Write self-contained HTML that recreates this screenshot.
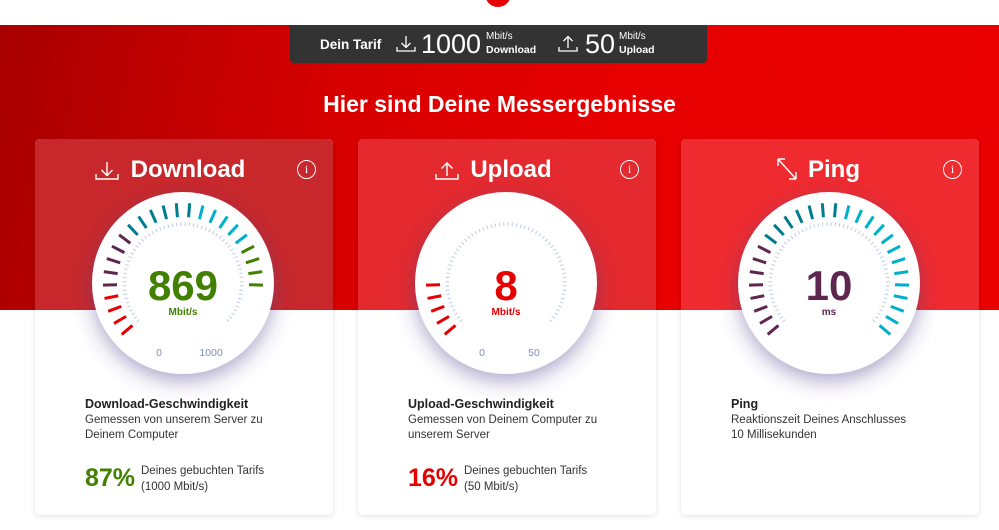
<!DOCTYPE html>
<html><head><meta charset="utf-8">
<style>
*{margin:0;padding:0;box-sizing:border-box}
body{width:999px;height:530px;overflow:hidden;background:#fff;font-family:"Liberation Sans",sans-serif;position:relative}
.red{position:absolute;left:0;top:25px;width:999px;height:285px;background:linear-gradient(100deg,#a80000 0%,#d80000 35%,#e60000 60%,#ea0000 100%)}
.logo{position:absolute;left:485px;top:-19px;width:26px;height:26px;border-radius:50%;background:#e60000}
.bar{position:absolute;left:290px;top:25px;width:417px;height:38px;background:#333;border-radius:0 0 4px 4px;color:#fff}
.bar .t{position:absolute;font-weight:bold}
h1{position:absolute;left:0;width:999px;top:91px;text-align:center;color:#fff;font-size:23px;font-weight:bold}
.card{position:absolute;top:139px;width:298px;height:376px;border-radius:5px;overflow:hidden;background:#fff;box-shadow:0 1px 6px rgba(0,0,0,.12)}
.card .top{position:absolute;left:0;top:0;width:100%;height:171px}
.card h2{position:absolute;top:17px;left:0;width:100%;text-align:center;color:#fff;font-size:24px;font-weight:bold}
.info{position:absolute;top:21px;width:19px;height:19px;border:1.5px solid #fff;border-radius:50%;color:#fff;font-size:12px;text-align:center;line-height:16px;font-family:"Liberation Serif",serif}
.card svg.g{position:absolute;left:0;top:0}
.txt{position:absolute;left:50px;top:258px;color:#333;font-size:11.5px;line-height:15px}
.txt b{font-size:12.5px;color:#222}
.pct{position:absolute;left:50px;top:325px;font-size:25px;font-weight:bold}
.pl{position:absolute;left:106px;top:324px;font-size:11.5px;line-height:16px;color:#333}
</style></head><body>
<div class="red"></div>
<div class="logo"></div>
<div class="bar">
 <div class="t" style="left:30px;top:12px;font-size:13.5px">Dein Tarif</div>
 <svg style="position:absolute;left:106px;top:10px" width="20" height="18" viewBox="0 0 20 18" fill="none" stroke="#fff" stroke-width="1.3"><path d="M10 1v11M5.5 8l4.5 4.5 4.5-4.5M1 12v4h18v-4"/></svg>
 <div class="t" style="left:131px;top:4px;font-size:27px;font-weight:normal">1000</div>
 <div class="t" style="left:196px;top:6px;font-size:10px;font-weight:normal">Mbit/s</div>
 <div class="t" style="left:196px;top:19px;font-size:10.5px">Download</div>
 <svg style="position:absolute;left:268px;top:10px" width="20" height="18" viewBox="0 0 20 18" fill="none" stroke="#fff" stroke-width="1.3"><path d="M10 13V2M5.5 6l4.5-4.5 4.5 4.5M1 12v4h18v-4"/></svg>
 <div class="t" style="left:295px;top:4px;font-size:27px;font-weight:normal">50</div>
 <div class="t" style="left:329px;top:6px;font-size:10px;font-weight:normal">Mbit/s</div>
 <div class="t" style="left:329px;top:19px;font-size:10.5px">Upload</div>
</div>
<h1>Hier sind Deine Messergebnisse</h1>

<div class="card" style="left:35px">
 <div class="top" style="background:#c8282b"></div>
 <svg style="position:absolute;left:60px;top:22px" width="24" height="20" viewBox="0 0 24 20" fill="none" stroke="#fff" stroke-width="1.4"><path d="M12 1v13M6.5 9l5.5 5.5 5.5-5.5M1 13v5h22v-5"/></svg>
 <h2 style="padding-left:8px">Download</h2>
 <div class="info" style="left:262px">i</div>
 <svg class="g" id="g1" width="298" height="376"></svg>
 <div class="txt"><b>Download-Geschwindigkeit</b><br>Gemessen von unserem Server zu<br>Deinem Computer</div>
 <div class="pct" style="color:#428000">87%</div>
 <div class="pl">Deines gebuchten Tarifs<br>(1000 Mbit/s)</div>
</div>

<div class="card" style="left:358px">
 <div class="top" style="background:#e42a2e"></div>
 <svg style="position:absolute;left:77px;top:22px" width="24" height="20" viewBox="0 0 24 20" fill="none" stroke="#fff" stroke-width="1.4"><path d="M12 15V2M6.5 7.5L12 2l5.5 5.5M1 13v5h22v-5"/></svg>
 <h2 style="padding-left:8px">Upload</h2>
 <div class="info" style="left:262px">i</div>
 <svg class="g" id="g2" width="298" height="376"></svg>
 <div class="txt"><b>Upload-Geschwindigkeit</b><br>Gemessen von Deinem Computer zu<br>unserem Server</div>
 <div class="pct" style="color:#e60000">16%</div>
 <div class="pl">Deines gebuchten Tarifs<br>(50 Mbit/s)</div>
</div>

<div class="card" style="left:681px">
 <div class="top" style="background:#ef2b2f"></div>
 <svg style="position:absolute;left:95px;top:18px" width="22" height="24" viewBox="0 0 22 24" fill="none" stroke="#fff" stroke-width="1.4"><path d="M2 2l18 20M2 2v7M2 2h7M20 22v-7M20 22h-7"/></svg>
 <h2 style="padding-left:8px">Ping</h2>
 <div class="info" style="left:262px">i</div>
 <svg class="g" id="g3" width="298" height="376"></svg>
 <div class="txt"><b>Ping</b><br>Reaktionszeit Deines Anschlusses<br>10 Millisekunden</div>
</div>

<script>
function gauge(id,cols,val,unit,vc,lbl){
 var s=document.getElementById(id),cx=148,cy=144,h='';
 h+='<defs><filter id="f'+id+'" x="-50%" y="-50%" width="200%" height="200%"><feDropShadow dx="0" dy="7" stdDeviation="10" flood-color="#4a3a8a" flood-opacity="0.45"/></filter></defs>';
 h+='<circle cx="'+cx+'" cy="'+cy+'" r="91" fill="#fff" filter="url(#f'+id+')"/>';
 var N=28,a0=-130,a1=130;
 for(var i=0;i<N;i++){var c=cols(i);if(!c)continue;var a=(a0+(a1-a0)*i/(N-1))*Math.PI/180,sn=Math.sin(a),cs=-Math.cos(a);
  h+='<line x1="'+(cx+66*sn)+'" y1="'+(cy+66*cs)+'" x2="'+(cx+80*sn)+'" y2="'+(cy+80*cs)+'" stroke="'+c+'" stroke-width="3"/>';}
 var M=64;
 for(var i=0;i<M;i++){var a=(a0+(a1-a0)*i/(M-1))*Math.PI/180,sn=Math.sin(a),cs=-Math.cos(a);
  h+='<line x1="'+(cx+57*sn)+'" y1="'+(cy+57*cs)+'" x2="'+(cx+60.5*sn)+'" y2="'+(cy+60.5*cs)+'" stroke="#c0cae6" stroke-width="1"/>';}
 h+='<text x="'+cx+'" y="'+(cy+17)+'" text-anchor="middle" font-family="Liberation Sans" font-weight="bold" font-size="42" fill="'+vc+'">'+val+'</text>';
 h+='<text x="'+cx+'" y="'+(cy+32)+'" text-anchor="middle" font-family="Liberation Sans" font-weight="bold" font-size="10" fill="'+vc+'">'+unit+'</text>';
 if(lbl){h+='<text x="'+(cx-24)+'" y="'+(cy+73)+'" text-anchor="middle" font-family="Liberation Sans" font-size="10.5" fill="#7f8fb8">0</text>';
  h+='<text x="'+(cx+28)+'" y="'+(cy+73)+'" text-anchor="middle" font-family="Liberation Sans" font-size="10.5" fill="#7f8fb8">'+lbl+'</text>';}
 s.innerHTML=h;
}
gauge('g1',function(i){if(i<4)return'#e60000';if(i<9)return'#5e2750';if(i<15)return'#007c92';if(i<20)return'#00b0ca';if(i<24)return'#428000';return null},'869','Mbit/s','#428000','1000');
gauge('g2',function(i){return i<5?'#e60000':null},'8','Mbit/s','#e60000','50');
gauge('g3',function(i){if(i<8)return'#5e2750';if(i<15)return'#007c92';return'#00b0ca'},'10','ms','#5e2750',null);
</script>
</body></html>
